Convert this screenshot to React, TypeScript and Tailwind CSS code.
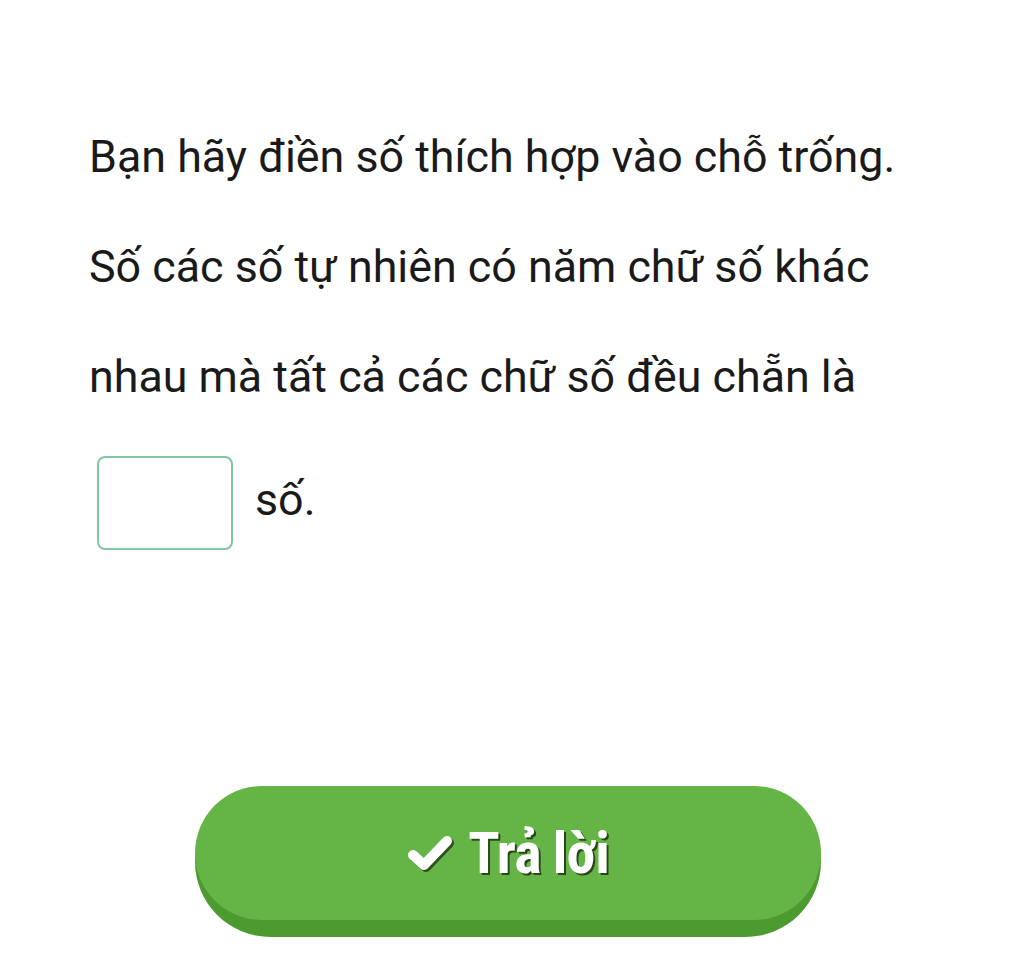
import React from 'react'

const CheckMark: React.FC = () => (
  <svg width="48" height="40" viewBox="0 0 48 40" className="drop-shadow-[2px_2px_0_rgba(0,0,0,0.55)]">
    <polyline
      points="7,22 18,32 41,8"
      fill="none"
      stroke="white"
      strokeWidth="10"
      strokeLinecap="round"
      strokeLinejoin="round"
    />
  </svg>
)

const App: React.FC = () => {
  return (
    <div className="min-h-[966px] w-[1024px] bg-white flex flex-col" style={{ fontFamily: 'Roboto, "Noto Sans", sans-serif' }}>
      {/* Đề bài */}
      <div className="pl-[89px] pr-6 pt-[102px] text-[44.8px] leading-[110px] text-[#1a1a1a]">
        <p>Bạn hãy điền số thích hợp vào chỗ trống.</p>
        <p>
          Số các số tự nhiên có năm chữ số khác
          <br />
          nhau mà tất cả các chữ số đều chẵn là
        </p>
        <div className="flex items-center gap-[22px] mt-[24px] ml-[8px]">
          <input className="w-[136px] h-[94px] rounded-[8px] border-2 border-[#82c7a2] outline-none px-3 text-[40px]" />
          <span className="leading-[60px] -mt-[6px]">số.</span>
        </div>
      </div>

      {/* Nút trả lời */}
      <div className="flex justify-center mt-[236px] pr-[9px]">
        <button className="w-[626px] h-[151px] rounded-[76px] bg-[#4c9a30] pb-[17px] flex">
          <span className="flex-1 rounded-[76px] bg-[#65b446] flex items-center justify-center gap-[14px] text-white">
            <CheckMark />
            <span
              className="text-[58px] font-bold tracking-[-1px] [text-shadow:2px_2px_0_rgba(0,0,0,0.6)]"
              style={{ fontFamily: '"Liberation Sans Narrow", "Roboto Condensed", Roboto, sans-serif' }}
            >
              Trả lời
            </span>
          </span>
        </button>
      </div>
    </div>
  )
}

export default App
